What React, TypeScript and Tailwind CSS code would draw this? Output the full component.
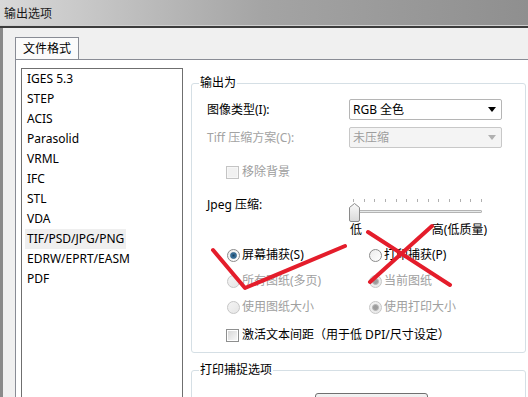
import React from "react";

const formats = [
  "IGES 5.3",
  "STEP",
  "ACIS",
  "Parasolid",
  "VRML",
  "IFC",
  "STL",
  "VDA",
  "TIF/PSD/JPG/PNG",
  "EDRW/EPRT/EASM",
  "PDF",
];

function Radio({ checked = false, disabled = false }: { checked?: boolean; disabled?: boolean }) {
  return (
    <span
      className={`flex items-center justify-center w-[13px] h-[13px] rounded-full border shrink-0 ${
        disabled
          ? "border-[#c6c6c6] bg-linear-to-br from-[#f4f4f4] to-[#e6e6e6]"
          : "border-[#8b8b8b] bg-linear-to-br from-[#ececec] to-[#ffffff]"
      }`}
    >
      {checked && (
        <span
          className={`w-[7px] h-[7px] rounded-full ${
            disabled
              ? "bg-[#9c9c9c] border border-[#b8b8b8]"
              : "bg-radial from-[#1b3f5c] to-[#4a93c9] border border-[#2c5f86]"
          }`}
        />
      )}
    </span>
  );
}

function Checkbox({ disabled = false }: { disabled?: boolean }) {
  return (
    <span
      className={`w-[13px] h-[13px] border shrink-0 flex items-center justify-center ${
        disabled ? "border-[#c4c4c4] bg-[#f7f7f7]" : "border-[#8e8f8f] bg-white"
      }`}
    >
      <span
        className={`w-[9px] h-[9px] ${
          disabled ? "bg-[#f1f1f1]" : "bg-linear-to-br from-[#d8d8d8] to-[#f7f7f7]"
        }`}
      />
    </span>
  );
}

function Combo({ value, disabled = false }: { value: string; disabled?: boolean }) {
  return (
    <div
      className={`w-[153px] h-[21px] rounded-[2px] border flex items-center justify-between pl-[3px] pr-[5px] ${
        disabled ? "bg-[#f4f4f4] border-[#c8c8c8] text-[#9d9d9d]" : "bg-white border-[#b5b5b5] text-black"
      }`}
    >
      <span>{value}</span>
      <svg width="8" height="5" viewBox="0 0 8 5">
        <path d="M0 0 H8 L4 5 Z" fill={disabled ? "#b0b0b0" : "#000"} />
      </svg>
    </div>
  );
}

export default function App() {
  const ticks = Array.from({ length: 13 }, (_, i) => i);
  return (
    <div className="relative w-[528px] h-[397px] overflow-hidden bg-[#f0f0f0] text-[12px] leading-[16px] text-black font-['Noto_Sans','Noto_Sans_CJK_SC',sans-serif] flex flex-col">
      {/* Title bar */}
      <div className="h-[25px] shrink-0 flex items-center pl-[4px] pt-[2px] bg-linear-to-r from-[#d9d9d9] via-[#a4a4a4] to-[#8f8f8f] text-[#1a1a1a]">
        输出选项
      </div>
      <div className="h-px shrink-0 bg-[#cfcfcf]" />
      <div className="h-[2px] shrink-0 bg-[#3c3c3c]" />

      <div className="flex-1 flex min-h-0">
        <div className="w-[3px] bg-[#8a8a8a] shrink-0" />
        <div className="flex-1 flex flex-col pl-[12px] pt-[9px] min-w-0 min-h-0">
          {/* Tab */}
          <div className="shrink-0 w-[64px] h-[22px] border border-b-0 border-[#898c95] bg-[#fbfbfb] flex items-center justify-center">
            文件格式
          </div>
          {/* Tab panel */}
          <div className="flex-1 min-h-0 flex border-t border-l border-[#898c95] bg-white pl-[5px] pt-[8px]">
            {/* Format list */}
            <div className="w-[162px] shrink-0 border border-b-0 border-[#6f6f6f] flex flex-col px-[3px]">
              {formats.map((f) => (
                <div key={f} className="shrink-0 h-[20px] flex items-center">
                  <span
                    className={`h-[20px] flex items-center px-[2px] ${
                      f === "TIF/PSD/JPG/PNG" ? "bg-[#efefef]" : ""
                    }`}
                  >
                    {f}
                  </span>
                </div>
              ))}
            </div>

            {/* Right side */}
            <div className="ml-[8px] flex flex-col">
              <fieldset className="shrink-0 mt-[7px] w-[335px] border border-[#d5dfe5] rounded-[3px]">
                <legend className="ml-[7px] px-[1px]">输出为</legend>
                <div className="pl-[15px] pb-[9px] flex flex-col">
                  <div className="mt-[8px] flex items-center">
                    <span className="w-[142px]">图像类型(I):</span>
                    <Combo value="RGB 全色" />
                  </div>
                  <div className="mt-[7px] flex items-center">
                    <span className="w-[142px] text-[#a3a3a3]">Tiff 压缩方案(C):</span>
                    <Combo value="未压缩" disabled />
                  </div>
                  <div className="mt-[16px] pl-[19px] flex items-center gap-[3px] text-[#9d9d9d]">
                    <Checkbox disabled />
                    <span>移除背景</span>
                  </div>
                  {/* Jpeg slider */}
                  <div className="mt-[16px] flex">
                    <span className="w-[142px] pt-[1px]">Jpeg 压缩:</span>
                    <div className="w-[138px] flex flex-col">
                      <div className="relative h-[26px]">
                        <div className="flex justify-between pl-[4px] pr-[5px] pt-[3px]">
                          {ticks.map((t) => (
                            <span key={t} className="w-px h-[3px] bg-[#b0b0b0]" />
                          ))}
                        </div>
                        <div className="absolute left-[1px] right-[5px] top-[14px] h-[3px] border border-[#b4b4b4] bg-[#e7eaea] rounded-[1px]" />
                        <svg className="absolute left-0 top-[7px]" width="11" height="19" viewBox="0 0 11 19">
                          <defs>
                            <linearGradient id="th" x1="0" y1="0" x2="0" y2="1">
                              <stop offset="0" stopColor="#fafafa" />
                              <stop offset="1" stopColor="#d9d9d9" />
                            </linearGradient>
                          </defs>
                          <path
                            d="M5.5 0.5 L10.5 4.5 V17 Q10.5 18.5 9 18.5 H2 Q0.5 18.5 0.5 17 V4.5 Z"
                            fill="url(#th)"
                            stroke="#8a8a8a"
                          />
                        </svg>
                      </div>
                      <div className="flex justify-between text-black">
                        <span className="pl-[1px]">低</span>
                        <span>高(低质量)</span>
                      </div>
                    </div>
                  </div>
                  {/* Radio rows */}
                  <div className="mt-[9px] pl-[20px] flex flex-col gap-[10px]">
                    <div className="flex items-center h-[16px]">
                      <span className="w-[142px] flex items-center gap-[2px]">
                        <Radio checked />
                        <span>屏幕捕获(S)</span>
                      </span>
                      <span className="flex items-center gap-[2px]">
                        <Radio />
                        <span>打印捕获(P)</span>
                      </span>
                    </div>
                    <div className="flex items-center h-[16px] text-[#a0a0a0]">
                      <span className="w-[142px] flex items-center gap-[2px]">
                        <Radio disabled />
                        <span>所有图纸(多页)</span>
                      </span>
                      <span className="flex items-center gap-[2px]">
                        <Radio checked disabled />
                        <span>当前图纸</span>
                      </span>
                    </div>
                    <div className="flex items-center h-[16px] text-[#a0a0a0]">
                      <span className="w-[142px] flex items-center gap-[2px]">
                        <Radio disabled />
                        <span>使用图纸大小</span>
                      </span>
                      <span className="flex items-center gap-[2px]">
                        <Radio checked disabled />
                        <span>使用打印大小</span>
                      </span>
                    </div>
                  </div>
                  <div className="mt-[12px] pl-[19px] flex items-center gap-[3px] h-[16px]">
                    <Checkbox />
                    <span>激活文本间距（用于低 DPI/尺寸设定）</span>
                  </div>
                </div>
              </fieldset>

              <fieldset className="shrink-0 mt-[9px] w-[335px] border border-[#d5dfe5] rounded-[3px] h-[60px]">
                <legend className="ml-[7px] px-[1px]">打印捕捉选项</legend>
                <div className="pl-[123px] pt-[15px]">
                  <div className="w-[113px] h-[23px] rounded-[3px] border border-[#707070] bg-linear-to-b from-[#f2f2f2] to-[#dddddd]" />
                </div>
              </fieldset>
            </div>
          </div>
        </div>
      </div>

      {/* Red pen marks drawn over the dialog */}
      <svg className="absolute left-0 top-0 pointer-events-none" width="528" height="397">
        <g stroke="#e41d2b" strokeWidth="4" fill="none" strokeLinecap="round" strokeLinejoin="round">
          <polyline points="213,250 245,288 345,246" />
          <line x1="368" y1="232" x2="450" y2="285" />
          <line x1="432" y1="226" x2="370" y2="282" />
        </g>
      </svg>
    </div>
  );
}
